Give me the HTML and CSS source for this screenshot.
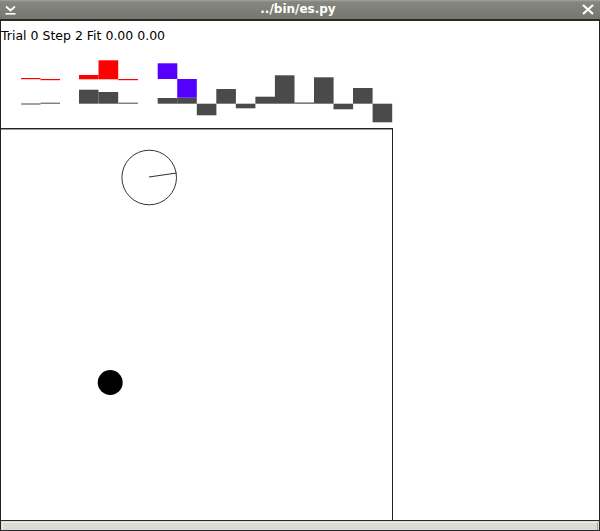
FILE: index.html
```html
<!DOCTYPE html>
<html>
<head>
<meta charset="utf-8">
<link rel="stylesheet" href="styles.css">
</head>
<body>
<div class="window">
  <div class="titlebar">
    <svg class="tb-icon" width="12" height="12" viewBox="0 0 12 12">
      <polyline points="1,1.5 5.5,5.5 10,1.5" fill="none" stroke="#fff" stroke-width="1.8"/>
      <line x1="0.5" y1="8.8" x2="10.5" y2="8.8" stroke="#fff" stroke-width="1.6"/>
    </svg>
    <div class="title">../bin/es.py</div>
    <svg class="tb-close" width="12" height="12" viewBox="0 0 12 12">
      <line x1="1" y1="1" x2="11" y2="10" stroke="#fff" stroke-width="2.2"/>
      <line x1="11" y1="1" x2="1" y2="10" stroke="#fff" stroke-width="2.2"/>
    </svg>
  </div>
  <div class="body">
    <div class="info">Trial 0 Step 2 Fit 0.00 0.00</div>
    <svg class="bars" width="598" height="85" viewBox="1 43 598 85">
      <g fill="#ff0000">
        <rect x="21" y="78" width="19.5" height="1.2"/>
        <rect x="40.5" y="79" width="19.5" height="1.2"/>
        <rect x="79" y="75" width="19.5" height="4.3"/>
        <rect x="98.5" y="60.3" width="19.7" height="19"/>
        <rect x="118.2" y="79" width="19.8" height="1.2"/>
      </g>
      <g fill="#4a4a4a">
        <rect x="21" y="103.5" width="19.5" height="1"/>
        <rect x="40.5" y="102.7" width="19.5" height="1"/>
        <rect x="79" y="89.7" width="19.5" height="14"/>
        <rect x="98.5" y="92" width="19.7" height="11.7"/>
        <rect x="118.2" y="102.7" width="19.8" height="1"/>
        <rect x="157.7" y="98" width="19.6" height="5.7"/>
        <rect x="177.2" y="97.7" width="19.6" height="6"/>
        <rect x="196.8" y="103.7" width="19.6" height="11.6"/>
        <rect x="216.3" y="89" width="19.6" height="14.7"/>
        <rect x="235.8" y="103.7" width="19.6" height="4.6"/>
        <rect x="255.4" y="96.7" width="19.6" height="7"/>
        <rect x="274.9" y="75.3" width="19.6" height="28.4"/>
        <rect x="294.4" y="102.5" width="19.6" height="1.2"/>
        <rect x="314" y="77.3" width="19.6" height="26.4"/>
        <rect x="333.5" y="103.7" width="19.6" height="5.6"/>
        <rect x="353" y="88" width="19.6" height="15.7"/>
        <rect x="372.6" y="103.7" width="19.6" height="18.6"/>
      </g>
      <g fill="#5500ff">
        <rect x="157.7" y="63.3" width="19.6" height="15.7"/>
        <rect x="177.2" y="79" width="19.6" height="18.7"/>
      </g>
    </svg>
    <div class="canvas">
      <svg width="391" height="391" viewBox="1 129 391 391">
        <circle cx="149.2" cy="177.5" r="27.3" fill="none" stroke="#333" stroke-width="1"/>
        <line x1="149" y1="177" x2="176.5" y2="173" stroke="#333" stroke-width="1.2"/>
        <circle cx="110.2" cy="382.5" r="12.5" fill="#000"/>
      </svg>
    </div>
  </div>
  <div class="statusbar"><div class="sb-inner"></div></div>
</div>
</body>
</html>
```
FILE: styles.css
```css
html, body {
  margin: 0;
  padding: 0;
  background: #fff;
  overflow: hidden;
}
.window {
  width: 600px;
  height: 531px;
  display: flex;
  flex-direction: column;
  font-family: "DejaVu Sans", sans-serif;
}
.titlebar {
  height: 19px;
  border-bottom: 2px solid #2a2a28;
  background: linear-gradient(#a3a49b 0, #85867d 2px, #76776e 100%);
  display: flex;
  align-items: center;
  position: relative;
}
.tb-icon {
  margin-left: 5px;
  margin-top: 2px;
}
.title {
  flex: 1;
  text-align: center;
  color: #fff;
  font-weight: bold;
  font-size: 12px;
  line-height: 19px;
  margin-right: 3px;
}
.tb-close {
  margin-right: 6px;
  margin-top: 0px;
}
.body {
  border-left: 1px solid #222;
  border-right: 1px solid #222;
  display: flex;
  flex-direction: column;
  flex: 1;
}
.info {
  margin-top: 8px;
  font-size: 12.5px;
  line-height: 14px;
  color: #000;
  height: 14px;
  white-space: nowrap;
}
.bars {
  display: block;
}
.canvas {
  width: 391px;
  height: 391px;
  border-top: 1px solid #222;
  border-right: 1px solid #222;
  box-shadow: inset 0 1px 0 #999;
}
.canvas svg {
  display: block;
}
.statusbar {
  height: 9px;
  border-top: 1px solid #2a2a2a;
  border-bottom: 1px solid #2a2a2a;
  border-left: 1px solid #2a2a2a;
  border-right: 1px solid #2a2a2a;
  background: #dcdcd5;
  padding: 1px 1px 0 1px;
  box-sizing: content-box;
}
.sb-inner {
  height: 7px;
  border-top: 1px solid #eeeeea;
  border-left: 1px solid #eeeeea;
  border-right: 1px solid #a5a59f;
}
```
